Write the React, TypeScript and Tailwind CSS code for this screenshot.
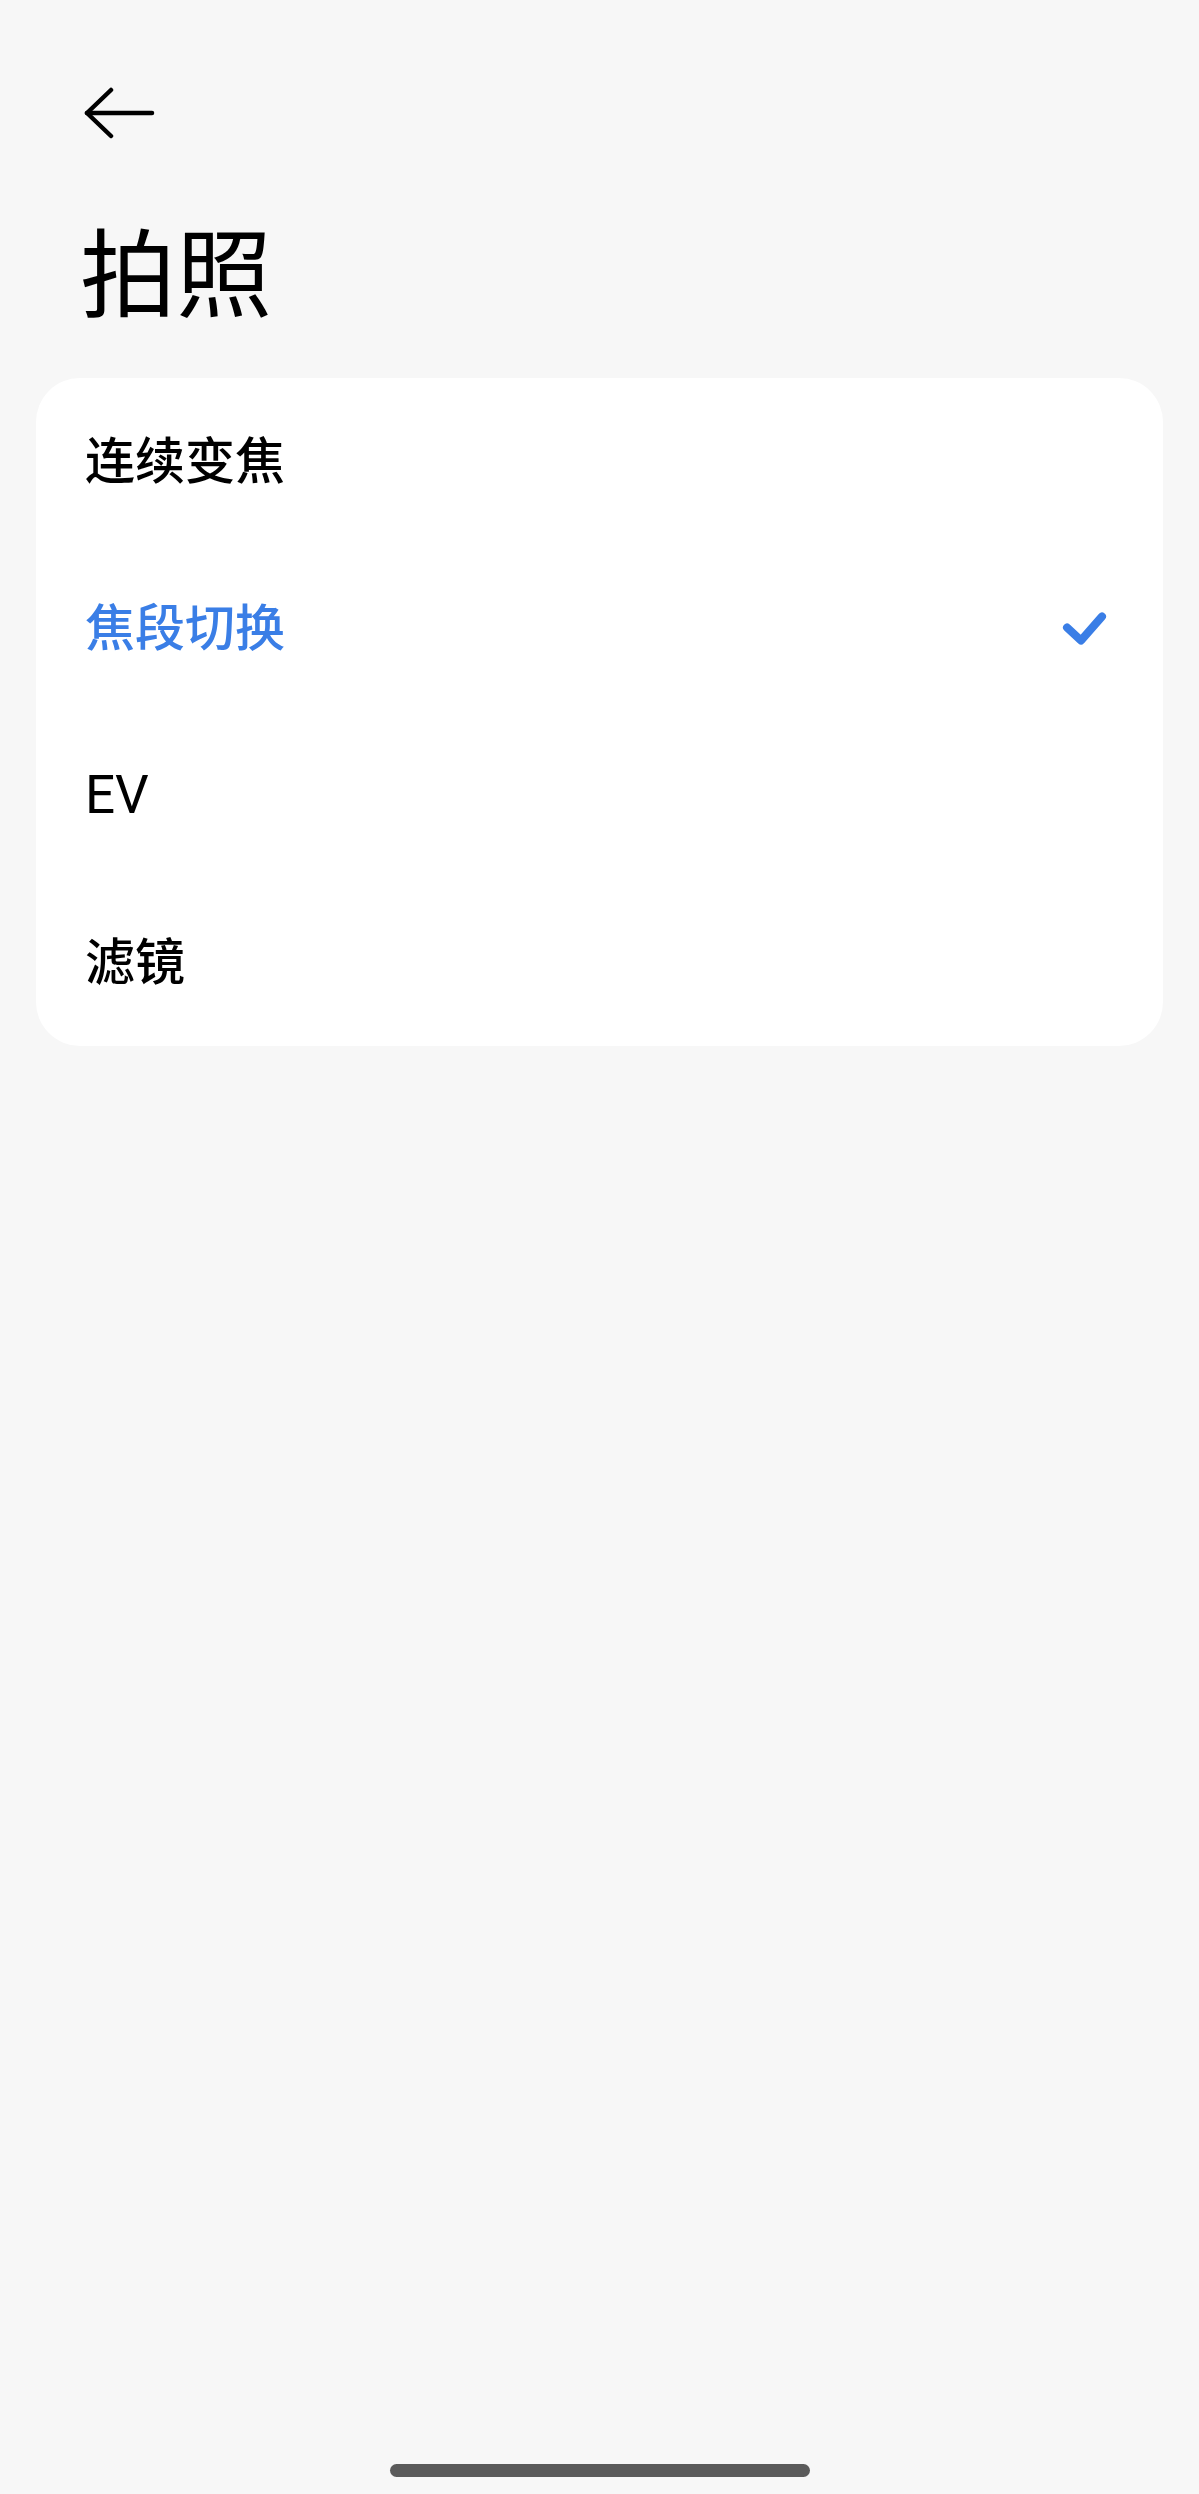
const font = 'font-["Roboto","Noto_Sans_CJK_SC",sans-serif]';

const items = [
  { label: '连续变焦', active: false, latin: false },
  { label: '焦段切换', active: true, latin: false },
  { label: 'EV', active: false, latin: true },
  { label: '滤镜', active: false, latin: false },
];

function BackArrow() {
  return (
    <svg width="72" height="52" viewBox="0 0 72 52" fill="none" stroke="#000" strokeWidth="4.5" strokeLinecap="round" strokeLinejoin="round">
      <path d="M28 3 L4 26 L28 49" />
      <path d="M4 26 H69" />
    </svg>
  );
}

function Check() {
  return (
    <svg width="48" height="40" viewBox="0 0 48 40" fill="none" stroke="#3a7ee6" strokeWidth="8" strokeLinecap="round" strokeLinejoin="round">
      <path d="M6 18.5 L20 31.5 L41 7.5" />
    </svg>
  );
}

export default function App() {
  return (
    <div className={`h-[2494px] w-full bg-[#f7f7f7] flex flex-col ${font}`}>
      <div className="pt-[87px] pl-[83px]">
        <BackArrow />
      </div>

      <h1 className="mt-[89px] pl-[80px] text-[96px] leading-[96px] font-normal text-black">拍照</h1>

      <div className="mt-[54px] mx-[36px] bg-white rounded-[44px] flex flex-col">
        {items.map((item) => (
          <div key={item.label} className="h-[167px] flex items-center justify-between pl-[49px] pr-[54px]">
            <span
              className={`leading-none ${item.latin ? 'text-[53px] font-normal' : 'text-[50px] font-medium'} ${
                item.active ? 'text-[#3a7ee6]' : 'text-black'
              }`}
            >
              {item.label}
            </span>
            {item.active && <Check />}
          </div>
        ))}
      </div>

      <div className="flex-1" />
      <div className="mb-[17px] mx-auto w-[420px] h-[13px] rounded-full bg-[#5b5b5b]" />
    </div>
  );
}
